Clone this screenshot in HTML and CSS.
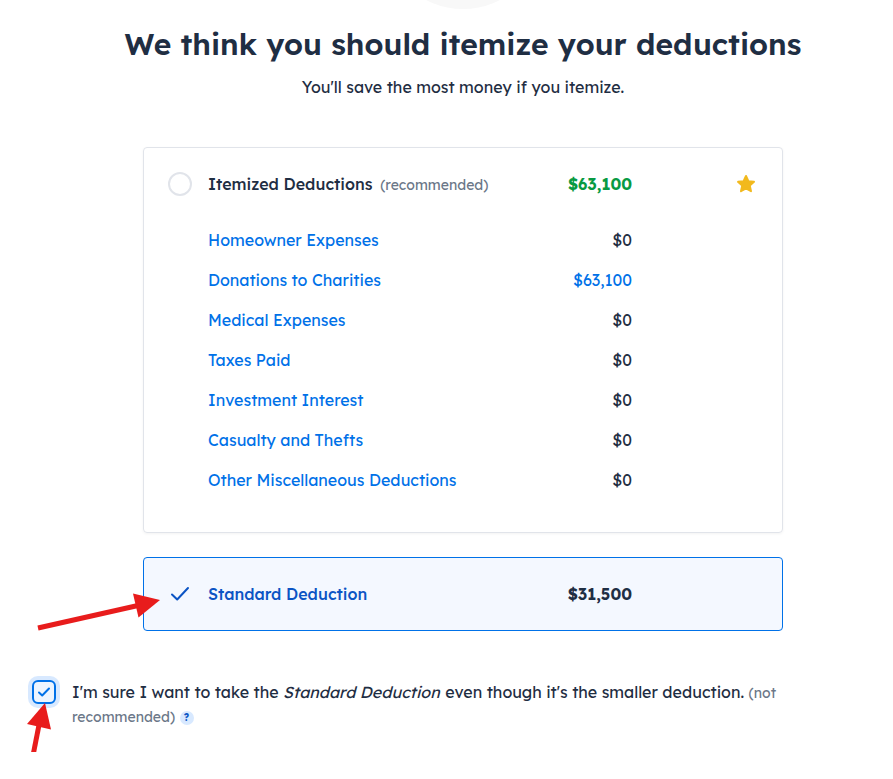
FILE: index.html
```html
<!DOCTYPE html>
<html lang="en">
<head>
    <meta charset="UTF-8">
    <meta name="viewport" content="width=device-width, initial-scale=1.0">
    <title>Deductions</title>
    <link rel="stylesheet" href="styles.css">
</head>
<body>

    <main class="page">
        <div class="hero"><div class="hero-circle"></div></div>

        <h1>We think you should itemize your deductions</h1>
        <p class="subtitle">You'll save the most money if you itemize.</p>

        <form class="deductions">
            <div class="options">
                <!-- Itemized -->
                <section class="card">
                    <div class="card-head">
                        <input type="radio" class="radio" id="itemized" name="deduction" value="itemized">
                        <label for="itemized" class="name">Itemized Deductions <span class="hint">(recommended)</span></label>
                        <span class="total best">$63,100</span>
                        <svg class="star" width="24" height="24" viewBox="0 0 24 24" aria-hidden="true">
                            <path d="M12 4l2.4 5.2 5.6.6-4.2 3.8 1.2 5.6-5-2.8-5 2.8 1.2-5.6L4 9.8l5.6-.6z" fill="#f2b91d" stroke="#f2b91d" stroke-width="2" stroke-linejoin="round"/>
                        </svg>
                    </div>
                    <table class="breakdown">
                        <tbody>
                            <tr><th scope="row"><a href="#">Homeowner Expenses</a></th><td>$0</td></tr>
                            <tr><th scope="row"><a href="#">Donations to Charities</a></th><td><a href="#">$63,100</a></td></tr>
                            <tr><th scope="row"><a href="#">Medical Expenses</a></th><td>$0</td></tr>
                            <tr><th scope="row"><a href="#">Taxes Paid</a></th><td>$0</td></tr>
                            <tr><th scope="row"><a href="#">Investment Interest</a></th><td>$0</td></tr>
                            <tr><th scope="row"><a href="#">Casualty and Thefts</a></th><td>$0</td></tr>
                            <tr><th scope="row"><a href="#">Other Miscellaneous Deductions</a></th><td>$0</td></tr>
                        </tbody>
                    </table>
                </section>

                <!-- Standard -->
                <section class="card selected">
                    <div class="card-head">
                        <span class="control">
                            <input type="radio" class="radio" id="standard" name="deduction" value="standard" checked>
                            <svg width="24" height="24" viewBox="0 0 24 24" aria-hidden="true">
                                <path d="M4 12.5l5.2 5L20 6" fill="none" stroke="#0b54c4" stroke-width="2" stroke-linecap="round" stroke-linejoin="round"/>
                            </svg>
                        </span>
                        <label for="standard" class="name">Standard Deduction</label>
                        <span class="total">$31,500</span>
                    </div>
                    <svg class="arrow arrow-card" width="124" height="40" viewBox="0 0 124 40" aria-hidden="true">
                        <path d="M2 35L102 12.5" stroke="#e81c1c" stroke-width="5"/>
                        <path d="M97 .5L124 7 102.500 24.500z" fill="#e81c1c"/>
                    </svg>
                </section>
            </div>

            <!-- Confirm -->
            <div class="confirm">
                <span class="control">
                    <input type="checkbox" class="checkbox" id="sure" checked>
                    <svg width="24" height="24" viewBox="0 0 24 24" aria-hidden="true">
                        <path d="M7 12.5l3.200 3L17 8.500" fill="none" stroke="#0071e8" stroke-width="2" stroke-linecap="round" stroke-linejoin="round"/>
                    </svg>
                    <svg class="arrow arrow-check" width="26" height="52" viewBox="0 0 26 52" aria-hidden="true">
                        <path d="M13 22L7.500 50" stroke="#e81c1c" stroke-width="5"/>
                        <path d="M19 0L1 21 25 26.500z" fill="#e81c1c"/>
                    </svg>
                </span>
                <div class="confirm-text">
                    <label for="sure">I'm sure I want to take the <em>Standard Deduction</em> even though it's the smaller deduction. <span class="hint">(not recommended)</span></label>
                    <button type="button" class="help" aria-label="Help">?</button>
                </div>
            </div>
        </form>
    </main>

</body>
</html>
```
FILE: styles.css
```css
* {
    box-sizing: border-box;
}
body {
    margin: 0;
    background: #fff;
    color: #1f2e43;
    font-family: Lexend, Inter, sans-serif;
    font-size: 16px;
    line-height: 24px;
}
.page {
    padding: 0 0 24px 33px;
}
.hero {
    display: flex;
    justify-content: center;
    align-items: flex-end;
    height: 9px;
    overflow: hidden;
}
.hero-circle {
    flex: none;
    width: 160px;
    height: 160px;
    border-radius: 50%;
    background: #f8f8f8;
}
h1 {
    margin: 15px 0 11px;
    font-size: 30px;
    line-height: 40px;
    font-weight: 600;
    text-align: center;
}
.subtitle {
    margin: 0 0 48px;
    text-align: center;
}
a {
    color: #0071e8;
    text-decoration: none;
}
a:hover {
    text-decoration: underline;
}
.options {
    display: flex;
    flex-direction: column;
    gap: 24px;
    max-width: 640px;
    margin: 0 auto;
}
.card {
    position: relative;
    padding: 24px;
    border: 1px solid #e1e4ea;
    border-radius: 4px;
    box-shadow: 0 1px 3px rgba(0, 0, 0, 0.05);
}
.card.selected {
    border-color: #0071e8;
    background: #f4f8ff;
    box-shadow: none;
}
.card-head {
    display: grid;
    grid-template-columns: 24px 1fr auto 110px;
    column-gap: 16px;
    align-items: center;
}
.control {
    position: relative;
    display: grid;
    flex: none;
    width: 24px;
    height: 24px;
}
.control > input,
.control > svg:not(.arrow) {
    grid-area: 1 / 1;
}
.control > svg {
    pointer-events: none;
}
.radio,
.checkbox {
    appearance: none;
    width: 24px;
    height: 24px;
    margin: 0;
    border: 2px solid #e1e4ea;
    border-radius: 50%;
    background: #fff;
}
.radio:checked {
    border-color: transparent;
    background: none;
}
.checkbox {
    border-color: #0071e8;
    border-radius: 6px;
    background: #edf5ff;
    box-shadow: 0 0 0 4px #d8e9ff;
}
.name {
    font-weight: 500;
}
.selected .name {
    color: #0b54c4;
}
.hint {
    color: #6b7788;
    font-size: 14px;
    line-height: 16px;
    font-weight: 400;
}
.name .hint {
    margin-left: 3px;
}
.total {
    font-weight: 700;
}
.best {
    color: #089a42;
}
.star {
    justify-self: end;
}
.breakdown {
    width: 100%;
    margin: 24px 0 8px;
    padding: 0 126px 0 40px;
    border-spacing: 0;
}
.breakdown th,
.breakdown td {
    height: 40px;
    padding: 0;
    font-weight: 400;
    text-align: left;
}
.breakdown td {
    text-align: right;
}
.confirm {
    display: flex;
    gap: 16px;
    margin: 49px 0 0 -1px;
    padding-right: 32px;
}
.confirm-text em {
    margin-right: 1px;
}
.help {
    width: 14px;
    height: 14px;
    padding: 0;
    border: 0;
    border-radius: 50%;
    background: #d8e9ff;
    color: #0b54c4;
    font: inherit;
    font-size: 10px;
    font-weight: 700;
    line-height: 14px;
    vertical-align: 1px;
}
/* red pointers */
.arrow {
    position: absolute;
    overflow: visible;
    pointer-events: none;
}
.arrow-card {
    top: 35px;
    left: -108px;
}
.arrow-check {
    top: 23px;
    left: -6px;
}
```
